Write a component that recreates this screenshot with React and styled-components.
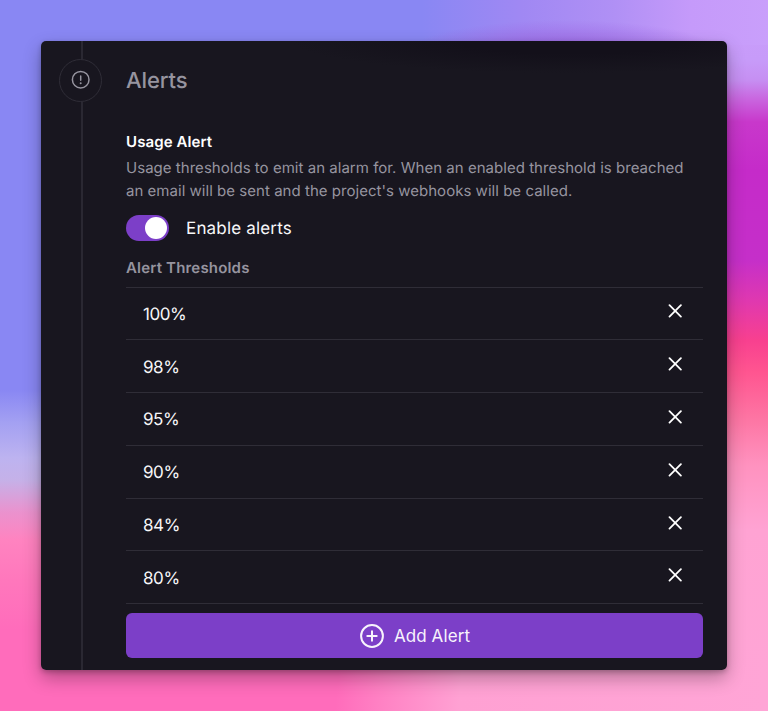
import { useState } from "react";
import styled, { createGlobalStyle } from "styled-components";

const GlobalStyle = createGlobalStyle`
    * {
        box-sizing: border-box;
    }

    body {
        margin: 0;
        font-family: Inter, "Liberation Sans", sans-serif;
        text-rendering: geometricPrecision;
        color: #f7f7f9;
    }
`;

const AlertIcon = () => (
    <svg width="20" height="20" viewBox="0 0 20 20" fill="none" stroke="currentColor" strokeLinecap="round">
        <circle cx="9.7" cy="9.7" r="8.3" strokeWidth="1.5"/>
        <path d="M9.7 6V10.2" strokeWidth="1.5"/>
        <circle cx="9.7" cy="13.2" r="1" fill="currentColor" stroke="none"/>
    </svg>
)

const CloseIcon = () => (
    <svg width="14" height="14" viewBox="0 0 14 14" fill="none" stroke="currentColor" strokeWidth="1.8" strokeLinecap="round">
        <path d="M1.5 1.2L12.9 12.6M12.9 1.2L1.5 12.6"/>
    </svg>
)

const PlusIcon = () => (
    <svg width="24" height="24" viewBox="0 0 24 24" fill="none" stroke="currentColor" strokeWidth="2" strokeLinecap="round">
        <circle cx="12" cy="12" r="10.9"/>
        <path d="M12 7.3V16.7M7.3 12H16.7"/>
    </svg>
)

const App = () => {
    const [enabled, setEnabled] = useState(true);
    const [thresholds, setThresholds] = useState([100, 98, 95, 90, 84, 80]);

    const removeThreshold = (value) => {
        setThresholds(thresholds.filter(item => item !== value));
    }

    return(
        <Page>
            <GlobalStyle/>
            <Card>
                <Rail>
                    <RailLine $height="17.5px"/>
                    <Badge><AlertIcon/></Badge>
                    <RailLine/>
                </Rail>
                <Content>
                    <Title>Alerts</Title>
                    <Heading>Usage Alert</Heading>
                    <Description>
                        Usage thresholds to emit an alarm for. When an enabled threshold is breached
                        an email will be sent and the project's webhooks will be called.
                    </Description>
                    <ToggleRow>
                        <Toggle role="switch" aria-checked={enabled} $on={enabled} onClick={()=>setEnabled(!enabled)}>
                            <Knob/>
                        </Toggle>
                        <ToggleLabel>Enable alerts</ToggleLabel>
                    </ToggleRow>
                    <Subheading>Alert Thresholds</Subheading>
                    <List>
                        {thresholds.map(value => (
                            <Row key={value}>
                                <Value>{value}%</Value>
                                <RemoveButton aria-label="Remove" onClick={()=>removeThreshold(value)}>
                                    <CloseIcon/>
                                </RemoveButton>
                            </Row>
                        ))}
                    </List>
                    <AddButton>
                        <PlusIcon/>
                        <span>Add Alert</span>
                    </AddButton>
                </Content>
            </Card>
        </Page>
    )
}

const Page = styled.main`
    width: 768px;
    height: 711px;
    padding: 41px;
    overflow: hidden;
    background:
        radial-gradient(ellipse 160px 34px at 565px 54px, #9a62e0 0%, rgba(154, 98, 224, 0) 100%) no-repeat 0 0 / 768px 90px,
        linear-gradient(90deg, #8987f3 0%, #8987f3 55%, #a088f3 68%, #b090f5 80%, #c59afa 90%, #c99ffb 100%) no-repeat 0 0 / 768px 45px,
        linear-gradient(95deg, #ff6cbb 0%, #ff6cbb 44%, #ff82c4 50%, #ffa1d3 60%, #ffa5d6 100%) no-repeat 0 650px / 768px 61px,
        linear-gradient(180deg, #c99ffb 0, #c79bf9 60px, #c68ff2 80px, #c968e0 98px, #c838cb 122px, #c52bc9 170px, #c52fc9 260px, #df38b0 300px, #f8408f 340px, #ff5590 372px, #fd76a4 420px, #ff92bf 465px, #ffa3d3 530px, #ffa5d6 100%) no-repeat 100% 0 / 50px 100%,
        linear-gradient(180deg, #8987f3 0, #8987f3 390px, #a3a0f2 422px, #bdb3f0 458px, #c5b1e8 480px, #ea92ce 512px, #ff83c0 540px, #ff77bc 580px, #ff6cbb 630px, #ff6cbb 100%);
`;

const Card = styled.section`
    display: flex;
    width: 686px;
    height: 629px;
    border-radius: 5px;
    background: radial-gradient(ellipse 280px 32px at 530px 0, #13101a 0, #13101a 40%, #18161f 100%);
    box-shadow: 0 8px 18px rgba(0, 0, 0, 0.3), 0 2px 5px rgba(0, 0, 0, 0.22);
    overflow: hidden;
`;

const Rail = styled.div`
    display: flex;
    flex-direction: column;
    align-items: center;
    width: 43px;
    margin-left: 18px;
    color: #96949f;
`;

const RailLine = styled.div`
    width: 2px;
    margin-left: 2px;
    background: #2a2832;
    flex: ${props => props.$height ? `0 0 ${props.$height}` : "1"};
`;

const Badge = styled.div`
    display: flex;
    align-items: center;
    justify-content: center;
    width: 43px;
    height: 43px;
    flex: none;
    border: 1.5px solid #2f2d37;
    border-radius: 50%;
`;

const Content = styled.div`
    display: flex;
    flex-direction: column;
    width: 577px;
    margin-left: 24px;
    padding-top: 25px;
`;

const Title = styled.h2`
    margin: 0;
    font-size: 22px;
    font-weight: 500;
    line-height: 30px;
    letter-spacing: -0.005em;
    color: #96949f;
`;

const Heading = styled.h3`
    margin: 34.5px 0 0;
    font-size: 15px;
    font-weight: 600;
    line-height: 22px;
    letter-spacing: 0.006em;
    color: #fff;
`;

const Description = styled.p`
    margin: 4.5px 0 0;
    font-size: 15px;
    line-height: 22.5px;
    letter-spacing: 0.002em;
    color: #96949f;
`;

const ToggleRow = styled.div`
    display: flex;
    align-items: center;
    gap: 17px;
    height: 26px;
    margin-top: 13px;
`;

const Toggle = styled.button`
    display: flex;
    justify-content: ${props => props.$on ? "flex-end" : "flex-start"};
    align-items: center;
    width: 43px;
    height: 26px;
    padding: 0 2px;
    border: none;
    border-radius: 13px;
    background: ${props => props.$on ? "#7c3fc8" : "#2d2b35"};

    &:hover {
        cursor: pointer;
    }
`;

const Knob = styled.span`
    width: 22px;
    height: 22px;
    border-radius: 50%;
    background: #fff;
`;

const ToggleLabel = styled.span`
    font-size: 17px;
    line-height: 26px;
    letter-spacing: 0.01em;
    padding-top: 2px;
`;

const Subheading = styled.h4`
    margin: 15.5px 0 0;
    font-size: 15px;
    font-weight: 600;
    line-height: 22px;
    letter-spacing: 0.012em;
    color: #96949f;
`;

const List = styled.ul`
    margin: 8px 0 0;
    padding: 0;
    list-style: none;
    border-top: 1px solid #2f2d37;
`;

const Row = styled.li`
    display: flex;
    align-items: center;
    justify-content: space-between;
    height: 52.8px;
    padding: 0 21px 0 17px;
    border-bottom: 1px solid #2f2d37;
`;

const Value = styled.span`
    padding-top: 3px;
    font-size: 17px;
    line-height: 26px;
    letter-spacing: -0.025em;
`;

const RemoveButton = styled.button`
    display: flex;
    padding: 0;
    margin-bottom: 4px;
    border: none;
    background: none;
    color: #fff;

    &:hover {
        cursor: pointer;
    }
`;

const AddButton = styled.button`
    display: flex;
    align-items: center;
    justify-content: center;
    gap: 10px;
    height: 45px;
    margin-top: 9px;
    padding: 0 0 0 1px;
    border: none;
    border-radius: 6px;
    background: #7c3fc8;
    color: #f7f3fc;
    font-family: inherit;
    font-size: 17px;
    letter-spacing: 0.005em;

    span {
        padding-top: 1px;
    }

    &:hover {
        cursor: pointer;
    }
`;

export default App;
